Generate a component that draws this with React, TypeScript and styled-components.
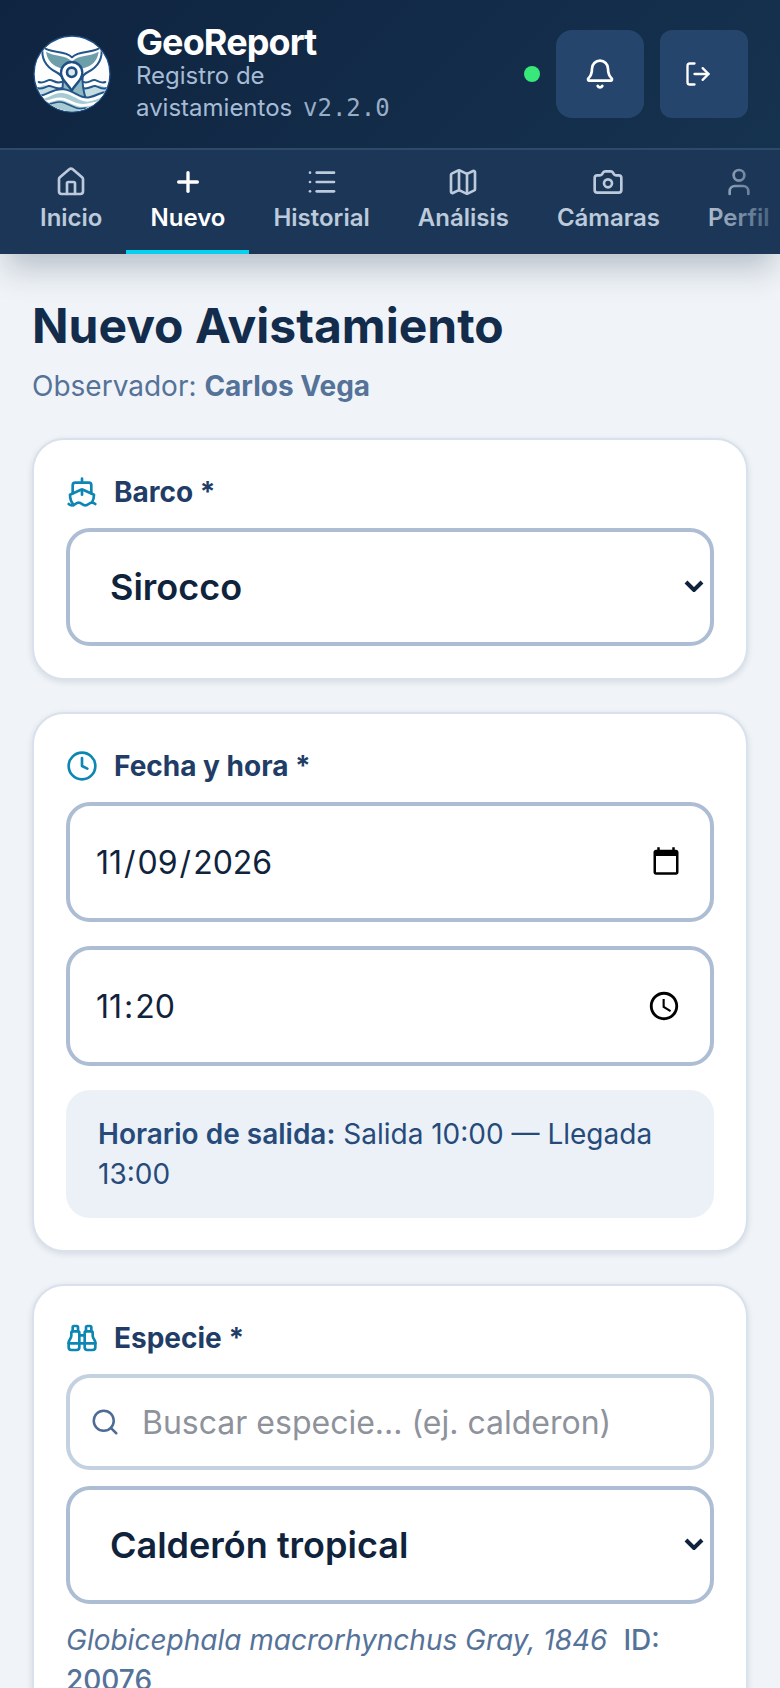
import { ReactNode } from 'react'
import styled, { createGlobalStyle } from 'styled-components'
import { Bell, Binoculars, Camera, Clock, House, List, LogOut, Map, Plus, Search, Ship, User } from 'lucide-react'

const tabs = [
  { label: 'Inicio', icon: House },
  { label: 'Nuevo', icon: Plus, active: true },
  { label: 'Historial', icon: List },
  { label: 'Análisis', icon: Map },
  { label: 'Cámaras', icon: Camera },
  { label: 'Perfil', icon: User },
]

export default function App () {
  return (
    <>
      <GlobalStyle />
      <Header>
        <TopBar>
          <Logo />
          <Brand>
            <BrandName>GeoReport</BrandName>
            <BrandText>
              Registro de avistamientos <Version>v2.2.0</Version>
            </BrandText>
          </Brand>
          <Actions>
            <StatusDot role='status' aria-label='En línea' />
            <IconButton type='button' aria-label='Notificaciones' $radius={16}>
              <Bell size={32} />
            </IconButton>
            <LogOutButton type='button' aria-label='Cerrar sesión' $radius={12}>
              <LogOut size={28} />
            </LogOutButton>
          </Actions>
        </TopBar>
        <Nav>
          {tabs.map(({ label, icon: Icon, active }) => (
            <Tab key={label} href={`#${label.toLowerCase()}`} $active={active} aria-current={active ? 'page' : undefined}>
              <Icon size={32} strokeWidth={active ? 2.5 : 2} />
              {label}
            </Tab>
          ))}
        </Nav>
      </Header>

      <Main>
        <Heading>Nuevo Avistamiento</Heading>
        <Observer>
          Observador: <strong>Carlos Vega</strong>
        </Observer>

        <Cards>
          <Card>
            <FieldLabel htmlFor='barco'>
              <Ship size={32} />
              Barco *
            </FieldLabel>
            <SelectField id='barco'>
              <option>Sirocco</option>
            </SelectField>
          </Card>

          <Card>
            <FieldLabel htmlFor='fecha'>
              <Clock size={32} />
              Fecha y hora *
            </FieldLabel>
            <Stack $gap={24}>
              <DateInput id='fecha' type='date' defaultValue='2026-11-09' />
              <DateInput type='time' defaultValue='11:20' aria-label='Hora' />
              <Schedule>
                <strong>Horario de salida:</strong> Salida 10:00 — Llegada 13:00
              </Schedule>
            </Stack>
          </Card>

          <Card>
            <FieldLabel htmlFor='especie'>
              <Binoculars size={32} />
              Especie *
            </FieldLabel>
            <Stack $gap={16}>
              <SearchBox>
                <Search size={30} />
                <SearchInput type='text' placeholder='Buscar especie... (ej. calderon)' aria-label='Buscar especie' />
              </SearchBox>
              <SelectField id='especie'>
                <option>Calderón tropical</option>
              </SelectField>
              <SpeciesInfo>
                <em>Globicephala macrorhynchus Gray, 1846</em>
                <SpeciesId>ID: 20076</SpeciesId>
              </SpeciesInfo>
            </Stack>
          </Card>
        </Cards>
      </Main>
    </>
  )
}

function SelectField ({ id, children }: { id: string; children: ReactNode }) {
  return (
    <SelectWrapper>
      <Select id={id}>{children}</Select>
      <Caret viewBox='0 0 20 12' aria-hidden='true'>
        <path d='M2 2l8 8 8-8' />
      </Caret>
    </SelectWrapper>
  )
}

function Logo () {
  return (
    <LogoSvg viewBox='0 0 240 240' role='img' aria-label='GeoReport'>
      <clipPath id='badge'>
        <circle cx='120' cy='120' r='112' />
      </clipPath>
      <circle cx='120' cy='120' r='114' fill='#fff' stroke='#1f4f87' strokeWidth='4' />
      <g clipPath='url(#badge)' fill='none' stroke='#24568a' strokeWidth='6' strokeLinecap='round' strokeLinejoin='round'>
        {/* side waves */}
        <path d='M0 160c16 8 24-4 34-6s20 12 56 4v40H0z' fill='#c4dde2' stroke='none' />
        <path d='M240 160c-16 8-24-4-34-6s-20 12-56 4v40h90z' fill='#c4dde2' stroke='none' />
        <path d='M20 144c14 6 22-4 32-6s18 12 36 6' />
        <path d='M14 162c16 6 26-4 36-6s20 12 42 6' />
        <path d='M220 144c-14 6-22-4-32-6s-18 12-34 6' />
        <path d='M226 162c-16 6-26-4-36-6s-20 12-38 6' />
        {/* tail stock */}
        <path d='M92 124c2 24 0 50-8 78h80c-10-28-14-54-12-78z' fill='#8db7c1' />
        {/* fluke */}
        <path d='M32 38c18 22 66 8 88 32 22-24 70-10 88-32 6 42-16 64-40 76-12 6-18 14-20 22H92c-2-8-8-16-20-22C48 102 26 80 32 38z' fill='#fff' />
        <path d='M42 53c24 15 60 8 78 30 18-22 56-15 80-30-4 31-22 42-46 50H86C66 95 46 84 42 53z' fill='#6d9faa' stroke='none' />
        {/* bottom waves */}
        <path d='M10 186c34 4 50-26 86-20s48 30 76 24 34-18 58-16v70H10z' fill='#fff' />
        <path d='M18 196c32 2 46-24 78-18s50 30 78 24 30-14 50-16v54H18z' fill='#a7cbd2' stroke='none' />
        <path d='M34 204c28 0 38-16 62-8s40 24 74 16l50-10' stroke='#fff' strokeWidth='8' />
        <path d='M38 212c26 0 36-14 58-6s34 22 66 16' strokeWidth='5' />
        {/* pin */}
        <path d='M119 170c-9-18-32-32-32-54a32 32 0 0 1 64 0c0 22-23 36-32 54z' fill='#fff' stroke='#1f4f87' strokeWidth='7' />
        <circle cx='119' cy='115' r='14' fill='#d8e8ec' stroke='#1f4f87' strokeWidth='8' />
      </g>
    </LogoSvg>
  )
}

const GlobalStyle = createGlobalStyle`
  *,
  *::before,
  *::after {
    box-sizing: border-box;
  }

  body {
    margin: 0;
    background: #f0f4f8;
    color: #102a43;
    font-family: Inter, 'Liberation Sans', sans-serif;
    font-size: 28px;
    line-height: 40px;
    overflow-x: hidden;
  }

  h1,
  p {
    margin: 0;
  }

  button,
  input,
  select {
    margin: 0;
    font-family: inherit;
  }

  svg {
    display: block;
    flex-shrink: 0;
  }
`

const Header = styled.header`
  position: relative;
  box-shadow: 0 20px 30px -6px rgba(15, 36, 64, 0.25);
`

const TopBar = styled.div`
  display: flex;
  align-items: center;
  gap: 24px;
  padding: 24px 32px;
  background: linear-gradient(135deg, #0f2440, #15324f);
`

const LogoSvg = styled.svg`
  width: 80px;
  height: 80px;
`

const Brand = styled.div`
  flex: 1;
  min-width: 0;
`

const BrandName = styled.div`
  color: #fff;
  font-size: 36px;
  font-weight: 700;
  line-height: 36px;
  letter-spacing: -0.025em;
`

const BrandText = styled.p`
  color: #a6bcd6;
  font-size: 24px;
  line-height: 32px;
  text-wrap: balance;
`

const Version = styled.span`
  margin-left: 4px;
  font-family: 'DejaVu Sans Mono', monospace;
  opacity: 0.9;
`

const Actions = styled.div`
  display: flex;
  align-items: center;
  gap: 16px;
`

const StatusDot = styled.span`
  width: 16px;
  height: 16px;
  border-radius: 50%;
  background: #38e87b;
`

const IconButton = styled.button<{ $radius: number }>`
  display: flex;
  align-items: center;
  justify-content: center;
  width: 88px;
  height: 88px;
  padding: 0;
  border: 0;
  border-radius: ${({ $radius }) => $radius}px;
  background: #26456c;
  color: #fff;
`

const LogOutButton = styled(IconButton)`
  padding-right: 12px;
`

const Nav = styled.nav`
  display: flex;
  padding: 0 16px;
  border-top: 2px solid #2d4a6b;
  background: #1b3657;
  overflow: hidden;
  position: relative;

  /* fades out the tabs that run past the edge */
  &::after {
    content: '';
    position: absolute;
    inset: 0 0 0 auto;
    width: 80px;
    background: linear-gradient(to right, rgba(27, 54, 87, 0), rgba(27, 54, 87, 0.8));
    pointer-events: none;
  }
`

const Tab = styled.a<{ $active?: boolean }>`
  display: flex;
  flex: none;
  flex-direction: column;
  align-items: center;
  gap: 4px;
  height: 104px;
  padding: 16px 24px 0;
  border-bottom: 4px solid ${({ $active }) => ($active ? '#06d0f0' : 'transparent')};
  color: ${({ $active }) => ($active ? '#fff' : '#bccadb')};
  font-size: 24px;
  font-weight: 600;
  line-height: 32px;
  text-decoration: none;
`

const Main = styled.main`
  padding: 40px 32px;
`

const Heading = styled.h1`
  color: #132c4c;
  font-size: 48px;
  font-weight: 700;
  line-height: 64px;
`

const Observer = styled.p`
  margin-top: 8px;
  color: #557299;

  strong {
    font-weight: 700;
  }
`

const Cards = styled.div`
  display: flex;
  flex-direction: column;
  gap: 32px;
  margin-top: 32px;
`

const Card = styled.section`
  padding: 32px;
  border: 2px solid #d9e1ec;
  border-radius: 32px;
  background: #fff;
  box-shadow: 0 2px 6px rgba(15, 36, 64, 0.12);
`

const FieldLabel = styled.label`
  display: flex;
  align-items: center;
  gap: 16px;
  margin-bottom: 16px;
  color: #1f3d66;
  font-weight: 700;

  svg {
    color: #0e86b4;
  }
`

const Stack = styled.div<{ $gap: number }>`
  display: flex;
  flex-direction: column;
  gap: ${({ $gap }) => $gap}px;
`

const SelectWrapper = styled.div`
  position: relative;
`

const Select = styled.select`
  appearance: none;
  display: block;
  width: 100%;
  height: 118px;
  padding: 0 40px;
  border: 4px solid #acbdd4;
  border-radius: 24px;
  background: #fff;
  color: #10233c;
  font-size: 36px;
  font-weight: 600;
`

const Caret = styled.svg`
  position: absolute;
  top: 52px;
  right: 10px;
  width: 20px;
  height: 12px;
  fill: none;
  stroke: #10233c;
  stroke-width: 4;
  pointer-events: none;
`

const DateInput = styled.input`
  display: block;
  width: 100%;
  height: 120px;
  padding: 0 26px 0 24px;
  border: 4px solid #acbdd4;
  border-radius: 24px;
  background: #fff;
  color: #10233c;
  font-size: 32px;

  &::-webkit-datetime-edit-month-field,
  &::-webkit-datetime-edit-day-field,
  &::-webkit-datetime-edit-year-field,
  &::-webkit-datetime-edit-hour-field,
  &::-webkit-datetime-edit-minute-field {
    padding: 2px;
  }

  &::-webkit-datetime-edit-ampm-field {
    display: none;
  }
`

const Schedule = styled.p`
  padding: 24px 32px;
  border-radius: 24px;
  background: #ecf1f8;
  color: #264b7a;

  strong {
    font-weight: 600;
  }
`

const SearchBox = styled.div`
  position: relative;

  svg {
    position: absolute;
    top: 33px;
    left: 24px;
    color: #4d6b94;
  }
`

const SearchInput = styled.input`
  display: block;
  width: 100%;
  height: 96px;
  padding: 0 24px 0 72px;
  border: 4px solid #c4d1e1;
  border-radius: 24px;
  background: #fff;
  color: #10233c;
  font-size: 32px;

  &::placeholder {
    color: #8e929b;
  }
`

const SpeciesInfo = styled.p`
  color: #557299;
`

const SpeciesId = styled.span`
  margin-left: 16px;
  font-weight: 500;
`
